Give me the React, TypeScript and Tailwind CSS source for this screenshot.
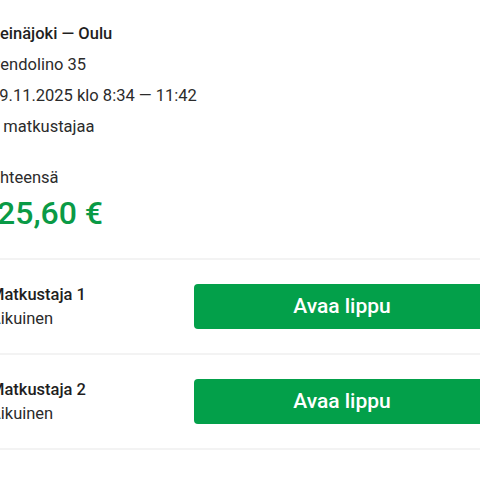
const passengers = [
  { name: "Matkustaja 1", type: "Aikuinen" },
  { name: "Matkustaja 2", type: "Aikuinen" },
];

export default function App() {
  return (
    <div
      className="w-[480px] h-[480px] overflow-hidden bg-white text-[#2b2b2b]"
      style={{ fontFamily: "Roboto, 'Noto Sans', sans-serif" }}
    >
      <div className="ml-[-10px] w-[500px]">
        {/* Trip summary */}
        <div className="pt-[18px] text-[16.5px] leading-[31px]">
          <p className="font-medium text-[#1f1f1f]">Seinäjoki — Oulu</p>
          <p>Pendolino 35</p>
          <p>29.11.2025 klo 8:34 — 11:42</p>
          <p>2 matkustajaa</p>
        </div>

        <div className="pt-[20px] pb-[25px]">
          <p className="text-[16.5px] leading-[31px]">Yhteensä</p>
          <p className="ml-[7px] text-[32px] leading-[40px] font-medium text-[#0a9a46]">25,60 €</p>
        </div>

        <div className="h-[2px] bg-[#f3f3f3]" />

        {passengers.map((p) => (
          <div key={p.name}>
            <div className="flex items-center h-[93px]">
              <div className="w-[204px] text-[16.5px] leading-[24px]">
                <p className="font-medium text-[#1f1f1f]">{p.name}</p>
                <p>{p.type}</p>
              </div>
              <button className="w-[296px] h-[45px] rounded-[4px] bg-[#03a04a] text-white text-[21px] font-medium">
                Avaa lippu
              </button>
            </div>
            <div className="h-[2px] bg-[#f3f3f3]" />
          </div>
        ))}
      </div>
    </div>
  );
}
